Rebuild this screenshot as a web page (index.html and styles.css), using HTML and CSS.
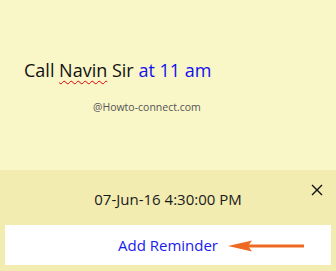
FILE: index.html
```html
<!DOCTYPE html>
<html>
<head>
<meta charset="utf-8">
<link rel="stylesheet" href="styles.css">
</head>
<body>
<div class="note">
  <div class="body">
    <p class="text">Call <span class="misspelled">Navin</span> Sir <span class="time">at 11 am</span></p>
    <p class="mark">@Howto-connect.com</p>
  </div>
  <div class="panel">
    <div class="head">
      <span class="date">07-Jun-16 4:30:00 PM</span>
      <svg class="close" width="12" height="12" viewBox="0 0 12 12"><path d="M1 1L11 11M11 1L1 11" stroke="#111" stroke-width="1.4" fill="none"/></svg>
    </div>
    <div class="action">
      <span class="add">Add Reminder</span>
      <svg class="arrow" width="78" height="12" viewBox="0 0 78 12"><path d="M20 6H76" stroke="#ee6a24" stroke-width="3"/><path d="M0 6L24 0.5L20 6L24 11.5Z" fill="#ee6a24"/></svg>
    </div>
  </div>
</div>
</body>
</html>
```
FILE: styles.css
```css
html, body { margin: 0; padding: 0; }
body { width: 336px; height: 271px; overflow: hidden; font-family: "Open Sans", "Noto Sans", sans-serif; }
.note { display: flex; flex-direction: column; height: 271px; }
.body { height: 170px; background: #f9f6c8; box-sizing: border-box; padding: 58px 0 0 24px; }
.text { margin: 0; font-size: 18px; line-height: 24px; color: #111; }
.misspelled { text-decoration: underline wavy #e00000; text-decoration-thickness: 1px; text-underline-offset: 3px; }
.time { color: #1010f0; }
.mark { margin: 17px 0 0 69px; font-size: 10.5px; line-height: 16px; color: #555; }
.panel { flex: 1; background: #f2ecb1; display: flex; flex-direction: column; padding: 0 5px 6px; }
.head { position: relative; height: 55px; display: flex; align-items: center; justify-content: center; }
.date { font-size: 15px; color: #1a1a1a; margin-top: 3px; }
.close { position: absolute; right: 8px; top: 14px; }
.action { position: relative; flex: 1; background: #fff; display: flex; align-items: center; justify-content: center; }
.add { font-size: 15px; color: #1a1aee; }
.arrow { position: absolute; left: 223px; top: 15px; }
```
